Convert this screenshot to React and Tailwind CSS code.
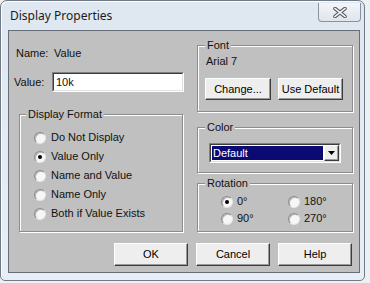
import React from "react";

function Radio({ checked }) {
  return (
    <span className="w-[12px] h-[12px] rounded-full bg-[#f7f7f7] border border-[#8a8a8a] border-r-[#e6e6e6] border-b-[#e6e6e6] shadow-[inset_1px_1px_0_#b8b8b8] flex items-center justify-center shrink-0">
      {checked && <span className="w-[4px] h-[4px] rounded-full bg-black" />}
    </span>
  );
}

function Button({ children, className = "h-[22px]" }) {
  return (
    <button
      className={`bg-[#eeeeee] border border-t-white border-l-white border-b-[#3c3c3c] border-r-[#3c3c3c] shadow-[inset_-1px_-1px_0_#9a9a9a] text-[11px] leading-none text-black ${className}`}
    >
      {children}
    </button>
  );
}

function Group({ title, legendClass = "ml-[7px]", className = "", children }) {
  return (
    <fieldset
      className={`border border-[#8c8c8c] shadow-[inset_1px_1px_0_#fff,1px_1px_0_#fff] p-0 m-0 min-w-0 ${className}`}
    >
      <legend className={`px-[2px] h-[13px] leading-[13px] bg-[#c0c0c0] ${legendClass}`}>
        {title}
      </legend>
      {children}
    </fieldset>
  );
}

export default function App() {
  const formats = [
    ["Do Not Display", false],
    ["Value Only", true],
    ["Name and Value", false],
    ["Name Only", false],
    ["Both if Value Exists", false],
  ];

  return (
    <div className="w-[370px] h-[283px] bg-[#eef1f4] font-['Liberation_Sans',Arial,sans-serif] text-[11px] text-[#111]">
      <div className="w-[365px] h-[281px] rounded-t-[7px] rounded-b-[5px] border border-[#6f7a86] bg-gradient-to-b from-[#dfe7f0] to-[#e8eef5] shadow-[inset_1px_1px_0_#fbfdff] flex flex-col">
        {/* title bar */}
        <div className="h-[29px] shrink-0 flex items-start justify-between pl-[9px] pr-[3px]">
          <span className="mt-[6px] font-['Noto_Sans',sans-serif] text-[12px] leading-[17px] text-[#1b1b1b]">
            Display Properties
          </span>
          <div className="mt-[2px] w-[43px] h-[19px] rounded-b-[4px] border border-t-0 border-[#8893a0] bg-gradient-to-b from-[#f3f6f9] to-[#dfe5ec] flex items-center justify-center">
            <svg width="14" height="11" viewBox="0 0 14 11">
              <path d="M2 1.5 L12 9.5 M12 1.5 L2 9.5" stroke="#5a5f66" strokeWidth="3.6" strokeLinecap="round" />
              <path d="M2 1.5 L12 9.5 M12 1.5 L2 9.5" stroke="#ffffff" strokeWidth="1.6" strokeLinecap="round" />
            </svg>
          </div>
        </div>

        {/* client area */}
        <div className="ml-[7px] w-[352px] h-[243px] bg-[#c0c0c0] border border-[#646d78] flex flex-col">
          <div className="flex">
            {/* left column */}
            <div className="ml-[5px] w-[170px] flex flex-col">
              <div className="mt-[16px] h-[13px] leading-[13px] pl-[2px] flex">
                <span className="w-[38px]">Name:</span>
                <span>Value</span>
              </div>
              <div className="mt-[12px] h-[20px] flex items-center">
                <span className="w-[38px]">Value:</span>
                <div className="w-[132px] h-[20px] border border-t-[#808080] border-l-[#808080] border-b-white border-r-white">
                  <div className="h-full border border-t-[#3c3c3c] border-l-[#3c3c3c] border-b-[#e0e0e0] border-r-[#e0e0e0] bg-white pl-[2px] leading-[16px]">
                    10k
                  </div>
                </div>
              </div>
              <Group
                title="Display Format"
                legendClass="ml-[6px]"
                className="mt-[16px] ml-[5px] w-[164px] h-[124px]"
              >
                <div className="pt-[7px] pl-[14px] flex flex-col">
                  {formats.map(([label, checked]) => (
                    <div key={label} className="h-[19px] flex items-center gap-[5px]">
                      <Radio checked={checked} />
                      <span>{label}</span>
                    </div>
                  ))}
                </div>
              </Group>
            </div>

            {/* right column */}
            <div className="ml-[13px] w-[156px] flex flex-col">
              <Group title="Font" className="mt-[8px] h-[73px]">
                <div className="pl-[7px] flex flex-col">
                  <div className="mt-[3px] h-[13px] leading-[13px] pl-[1px]">Arial 7</div>
                  <div className="mt-[10px] flex gap-[7px]">
                    <Button className="w-[66px] h-[22px]">Change...</Button>
                    <Button className="w-[65px] h-[22px]">Use Default</Button>
                  </div>
                </div>
              </Group>

              <Group title="Color" className="mt-[9px] h-[52px]">
                <div className="pl-[11px] pt-[9px]">
                  <div className="w-[132px] h-[20px] border border-t-[#808080] border-l-[#808080] border-b-white border-r-white">
                    <div className="h-full border border-t-[#3c3c3c] border-l-[#3c3c3c] border-b-[#e0e0e0] border-r-[#e0e0e0] bg-white flex items-center">
                      <div className="flex-1 h-[14px] ml-[1px] bg-[#0a0a72] text-white leading-[14px] pl-[1px]">
                        Default
                      </div>
                      <div className="w-[15px] h-[16px] ml-[1px] bg-[#eeeeee] border border-t-white border-l-white border-b-[#3c3c3c] border-r-[#3c3c3c] shadow-[inset_-1px_-1px_0_#9a9a9a] flex items-center justify-center">
                        <svg width="7" height="4" viewBox="0 0 7 4">
                          <path d="M0 0 H7 L3.5 4 Z" fill="#000" />
                        </svg>
                      </div>
                    </div>
                  </div>
                </div>
              </Group>

              <Group title="Rotation" className="mt-[4px] h-[55px]">
                <div className="pt-[3px] pl-[23px] grid grid-cols-[67px_1fr]">
                  {[
                    ["0°", true],
                    ["180°", false],
                    ["90°", false],
                    ["270°", false],
                  ].map(([label, checked]) => (
                    <div key={label} className="h-[17px] flex items-center gap-[4px]">
                      <Radio checked={checked} />
                      <span>{label}</span>
                    </div>
                  ))}
                </div>
              </Group>
            </div>
          </div>

          {/* buttons */}
          <div className="mt-[11px] pr-[7px] flex justify-end gap-[8px]">
            <Button className="w-[74px] h-[23px]">OK</Button>
            <Button className="w-[74px] h-[23px]">Cancel</Button>
            <Button className="w-[74px] h-[23px]">Help</Button>
          </div>
        </div>
      </div>
    </div>
  );
}
